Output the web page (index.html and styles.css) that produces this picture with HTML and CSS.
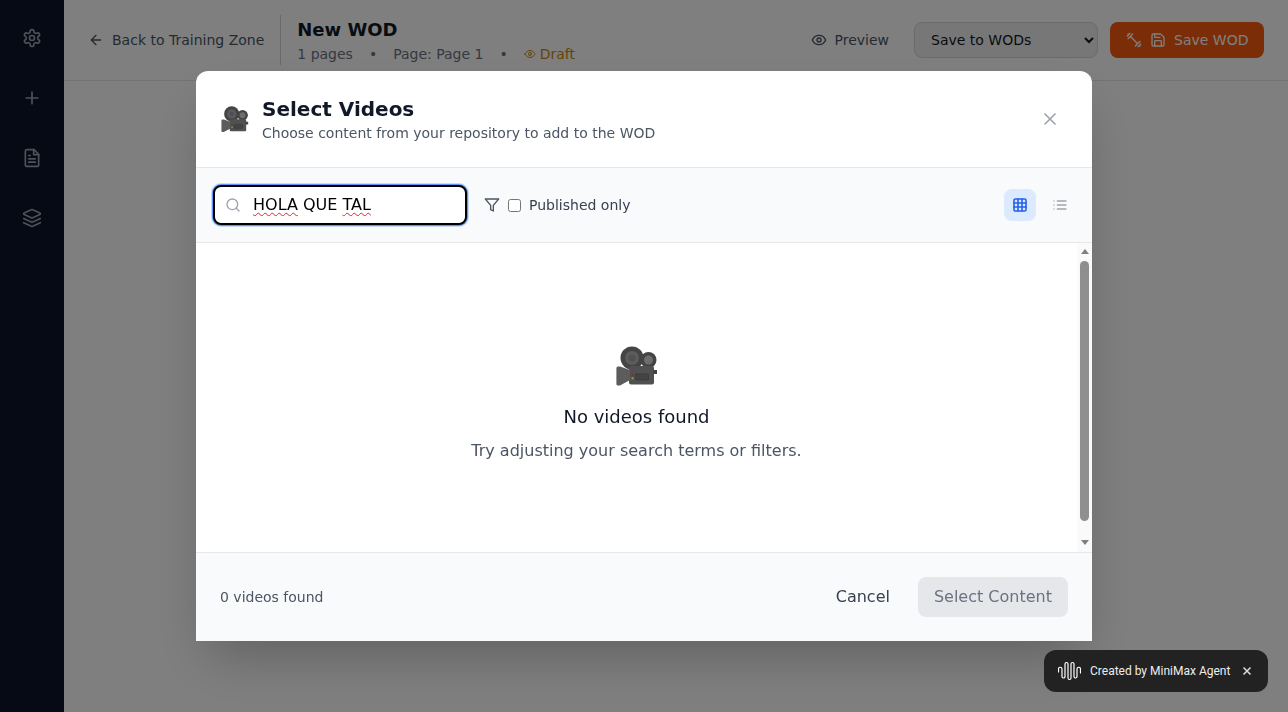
FILE: index.html
```html
<!DOCTYPE html>
<html lang="en">
<head>
<meta charset="utf-8">
<title>New WOD</title>
<link rel="stylesheet" href="styles.css">
</head>
<body>
<svg class="defs" width="0" height="0" aria-hidden="true">
  <symbol id="camera" viewBox="0 0 42 41">
    <circle cx="16" cy="12" r="11.5" fill="#444"/>
    <circle cx="16" cy="12" r="7" fill="#5c5c5c"/>
    <circle cx="16" cy="12" r="3.5" fill="#505050"/>
    <circle cx="32.5" cy="14" r="8" fill="#444"/>
    <circle cx="32.5" cy="14" r="4.5" fill="#6e6e6e"/>
    <rect x="13" y="20" width="25" height="18.5" rx="2" fill="#505050"/>
    <path d="M37 24h4v4h-4z" fill="#444"/>
    <path d="M2 20.5h2L14 24v10L4 39.5H2a1.6 1.6 0 0 1-1.6-1.6V22a1.6 1.6 0 0 1 1.6-1.5z" fill="#5c5c5c"/>
    <rect x="19.5" y="28" width="13" height="6" rx="1" fill="#444" stroke="#333" stroke-width=".6"/>
    <rect x="15.5" y="28" width="2.2" height="2" fill="#a32020"/>
    <rect x="15.5" y="31.3" width="2.2" height="2" fill="#6cae2f"/>
  </symbol>
</svg>

<div class="app">
  <nav class="rail">
    <svg class="icon rail-icon" viewBox="0 0 24 24"><path d="M12.22 2h-.44a2 2 0 0 0-2 2v.18a2 2 0 0 1-1 1.73l-.43.25a2 2 0 0 1-2 0l-.15-.08a2 2 0 0 0-2.73.73l-.22.38a2 2 0 0 0 .73 2.73l.15.1a2 2 0 0 1 1 1.72v.51a2 2 0 0 1-1 1.74l-.15.09a2 2 0 0 0-.73 2.73l.22.38a2 2 0 0 0 2.73.73l.15-.08a2 2 0 0 1 2 0l.43.25a2 2 0 0 1 1 1.73V20a2 2 0 0 0 2 2h.44a2 2 0 0 0 2-2v-.18a2 2 0 0 1 1-1.73l.43-.25a2 2 0 0 1 2 0l.15.08a2 2 0 0 0 2.73-.73l.22-.39a2 2 0 0 0-.73-2.73l-.15-.08a2 2 0 0 1-1-1.74v-.5a2 2 0 0 1 1-1.74l.15-.09a2 2 0 0 0 .73-2.73l-.22-.38a2 2 0 0 0-2.73-.73l-.15.08a2 2 0 0 1-2 0l-.43-.25a2 2 0 0 1-1-1.73V4a2 2 0 0 0-2-2z"/><circle cx="12" cy="12" r="3"/></svg>
    <svg class="icon rail-icon" viewBox="0 0 24 24"><path d="M5 12h14M12 5v14"/></svg>
    <svg class="icon rail-icon" viewBox="0 0 24 24"><path d="M14.5 2H6a2 2 0 0 0-2 2v16a2 2 0 0 0 2 2h12a2 2 0 0 0 2-2V7.5L14.5 2z"/><path d="M14 2v6h6M16 13H8M16 17H8M10 9H8"/></svg>
    <svg class="icon rail-icon" viewBox="0 0 24 24"><path d="M12.83 2.18a2 2 0 0 0-1.66 0L2.6 6.08a1 1 0 0 0 0 1.83l8.58 3.91a2 2 0 0 0 1.66 0l8.58-3.9a1 1 0 0 0 0-1.83Z"/><path d="m22 17.65-9.17 4.16a2 2 0 0 1-1.66 0L2 17.65"/><path d="m22 12.65-9.17 4.16a2 2 0 0 1-1.66 0L2 12.65"/></svg>
  </nav>
  <div class="main">
    <header class="topbar">
      <div class="topbar-left">
        <a class="back">
          <svg class="icon i16" viewBox="0 0 24 24"><path d="m12 19-7-7 7-7M19 12H5"/></svg>
          Back to Training Zone
        </a>
        <div class="title-block">
          <h1 class="page-title">New WOD</h1>
          <div class="meta">
            <span>1 pages</span><span>•</span><span>Page: Page 1</span><span>•</span>
            <span class="draft"><svg class="icon i12" viewBox="0 0 24 24"><path d="M2 12s3-7 10-7 10 7 10 7-3 7-10 7-10-7-10-7Z"/><circle cx="12" cy="12" r="3"/></svg>Draft</span>
          </div>
        </div>
      </div>
      <div class="topbar-right">
        <a class="preview">
          <svg class="icon i16" viewBox="0 0 24 24"><path d="M2 12s3-7 10-7 10 7 10 7-3 7-10 7-10-7-10-7Z"/><circle cx="12" cy="12" r="3"/></svg>
          Preview
        </a>
        <select class="target"><option>Save to WODs</option></select>
        <button class="save">
          <svg class="icon i16" viewBox="0 0 24 24"><path d="m6.5 6.5 11 11M21 21l-1-1M3 3l1 1M18 22l4-4M2 6l4-4M3 10l7-7M14 21l7-7"/></svg>
          <svg class="icon i16" viewBox="0 0 24 24"><path d="M15.2 3a2 2 0 0 1 1.4.6l3.8 3.8a2 2 0 0 1 .6 1.4V19a2 2 0 0 1-2 2H5a2 2 0 0 1-2-2V5a2 2 0 0 1 2-2z"/><path d="M17 21v-7a1 1 0 0 0-1-1H8a1 1 0 0 0-1 1v7M7 3v4a1 1 0 0 0 1 1h7"/></svg>
          <span>Save WOD</span>
        </button>
      </div>
    </header>
  </div>
</div>

<div class="overlay">
  <section class="modal">
    <div class="modal-head">
      <div class="head-left">
        <svg class="emoji-sm"><use href="#camera"/></svg>
        <div>
          <h2 class="modal-title">Select Videos</h2>
          <p class="modal-sub">Choose content from your repository to add to the WOD</p>
        </div>
      </div>
      <svg class="icon close" viewBox="0 0 24 24"><path d="M18 6 6 18M6 6l12 12"/></svg>
    </div>
    <div class="toolbar">
      <div class="search">
        <svg class="icon i16 search-icon" viewBox="0 0 24 24"><circle cx="11" cy="11" r="8"/><path d="m21 21-4.3-4.3"/></svg>
        <span class="query"><span class="typo">HOLA</span> QUE <span class="typo">TAL</span></span>
      </div>
      <svg class="icon i16 filter" viewBox="0 0 24 24"><path d="M22 3H2l8 9.46V19l4 2v-8.54z"/></svg>
      <label class="published"><input type="checkbox" class="check">Published only</label>
      <div class="views">
        <span class="view active"><svg class="icon i16 grid" viewBox="0 0 24 24"><rect x="3" y="3" width="18" height="18" rx="2"/><path d="M3 9h18M3 15h18M9 3v18M15 3v18"/></svg></span>
        <span class="view"><svg class="icon i16" viewBox="0 0 24 24"><path d="M8 6h13M8 12h13M8 18h13M3 6h.01M3 12h.01M3 18h.01"/></svg></span>
      </div>
    </div>
    <div class="results">
      <div class="empty">
        <svg class="emoji-lg"><use href="#camera"/></svg>
        <h3 class="empty-title">No videos found</h3>
        <p class="empty-text">Try adjusting your search terms or filters.</p>
      </div>
      <div class="scrollbar" aria-hidden="true">
        <span class="arrow-up"></span>
        <span class="thumb"></span>
        <span class="arrow-down"></span>
      </div>
    </div>
    <div class="modal-foot">
      <span class="count">0 videos found</span>
      <div class="actions">
        <button class="cancel">Cancel</button>
        <button class="select-content">Select Content</button>
      </div>
    </div>
  </section>
</div>

<aside class="toast">
  <svg class="wave" viewBox="0 0 23 22"><path d="M.5 12V9a1.75 1.75 0 0 1 3.5 0v7.5a1.5 1.5 0 0 0 3 0V4a1.5 1.5 0 0 1 3 0v14a1.5 1.5 0 0 0 3 0V4a1.5 1.5 0 0 1 3 0v12.5a1.5 1.5 0 0 0 3 0V9a1.75 1.75 0 0 1 3.5 0v4"/></svg>
  <span class="toast-text">Created by MiniMax Agent</span>
  <svg class="toast-close" viewBox="0 0 10 10"><path d="M1.5 1.5l7 7M8.5 1.5l-7 7"/></svg>
</aside>
</body>
</html>
```

FILE: styles.css
```css
* { box-sizing: border-box; }
html, body { margin: 0; height: 100%; overflow: hidden; }
body { font-family: "DejaVu Sans", sans-serif; background: #fff; color: #111827; }
h1, h2, h3, p { margin: 0; }
button { font-family: inherit; border: 0; }
.defs { position: absolute; }

.icon { fill: none; stroke: currentColor; stroke-width: 2; stroke-linecap: round; stroke-linejoin: round; flex: none; }
.i16 { width: 16px; height: 16px; }
.i12 { width: 12px; height: 12px; }

.app { display: flex; height: 712px; }
.rail { width: 64px; flex: none; background: #0a1428; display: flex; flex-direction: column; align-items: center; gap: 40px; padding-top: 28px; color: #9ca3af; }
.rail-icon { width: 20px; height: 20px; }

.main { flex: 1; min-width: 0; background: #fff; }
.topbar { height: 81px; border-bottom: 1px solid #e5e7eb; display: flex; align-items: center; justify-content: space-between; padding: 0 24px; }
.topbar-left { display: flex; align-items: center; }
.back { display: flex; align-items: center; gap: 8px; font-size: 14px; color: #4b5563; padding-right: 16px; height: 50px; margin-right: 16px; border-right: 1px solid #d1d5db; }
.page-title { font-size: 18px; line-height: 28px; font-weight: 700; color: #111827; }
.meta { display: flex; gap: 16px; font-size: 14px; line-height: 20px; color: #6b7280; }
.draft { display: flex; align-items: center; gap: 4px; color: #ca8a04; }
.topbar-right { display: flex; align-items: center; gap: 12px; }
.preview { display: flex; align-items: center; gap: 8px; font-size: 14px; color: #4b5563; padding: 0 13px 0 16px; }
.target { width: 184px; height: 36px; font-family: inherit; font-size: 14px; color: #111827; background: #efefef; border: 1px solid #d1d5db; border-radius: 8px; padding: 0 12px; }
.save { display: flex; align-items: center; gap: 8px; width: 154px; height: 36px; padding: 0 16px; border-radius: 8px; background: #f55a0e; color: #fff; font-size: 14px; white-space: nowrap; }

.overlay { position: fixed; inset: 0; background: rgba(0, 0, 0, .5); display: flex; align-items: center; justify-content: center; }
.modal { width: 896px; height: 570px; background: #fff; border-radius: 12px 12px 0 0; overflow: hidden; display: flex; flex-direction: column; box-shadow: 0 25px 50px -12px rgba(0, 0, 0, .25); }

.modal-head { height: 97px; flex: none; border-bottom: 1px solid #e5e7eb; padding: 0 32px 0 25px; display: flex; align-items: center; justify-content: space-between; }
.head-left { display: flex; align-items: center; gap: 13px; }
.emoji-sm { width: 28px; height: 27px; }
.modal-title { font-size: 20px; line-height: 28px; font-weight: 700; color: #111827; }
.modal-sub { font-size: 14px; line-height: 20px; color: #4b5563; }
.close { width: 20px; height: 20px; color: #9ca3af; stroke-width: 2; }

.toolbar { height: 75px; flex: none; background: #f9fafb; border-bottom: 1px solid #e5e7eb; padding: 0 16px; display: flex; align-items: center; }
.search { width: 254px; height: 40px; background: #fff; border: 2px solid #000; border-radius: 8px; box-shadow: 0 0 0 1px #5b96f7, 0 0 0 2px #c5dafc; display: flex; align-items: center; padding-left: 10px; margin: 0 17px 0 1px; }
.search-icon { color: #9ca3af; }
.query { margin: 0 0 2px 12px; font-size: 16px; color: #000; }
.typo { text-decoration: underline wavy #e5252a 1px; text-underline-offset: 2px; text-decoration-skip-ink: none; }
.filter { color: #4b5563; margin-right: 8px; }
.published { display: flex; align-items: center; gap: 8px; font-size: 14px; color: #374151; }
.check { width: 13px; height: 13px; margin: 0; }
.views { margin-left: auto; display: flex; gap: 8px; }
.view { width: 32px; height: 32px; border-radius: 8px; display: flex; align-items: center; justify-content: center; color: #9ca3af; }
.view.active { background: #dbeafe; color: #2563eb; }
.grid { stroke-width: 2.4; }

.results { flex: 1; min-height: 0; display: flex; }
.empty { flex: 1; min-width: 0; padding-top: 103px; display: flex; flex-direction: column; align-items: center; }
.emoji-lg { width: 42px; height: 41px; margin-bottom: 16px; flex: none; }
.empty-title { font-size: 18px; line-height: 28px; font-weight: 400; color: #111827; margin-bottom: 8px; }
.empty-text { font-size: 16px; line-height: 24px; color: #4b5563; }

.scrollbar { width: 15px; flex: none; background: #fafafa; display: flex; flex-direction: column; align-items: center; padding: 6px 0 7px; }
.arrow-up { width: 0; height: 0; border: 4.5px solid transparent; border-top: 0; border-bottom: 5px solid #808080; }
.thumb { width: 9px; height: 260px; margin: 7px 0 19px; background: #8f8f8f; border-radius: 5px; }
.arrow-down { width: 0; height: 0; border: 4.5px solid transparent; border-bottom: 0; border-top: 5px solid #808080; }

.modal-foot { height: 89px; flex: none; background: #f9fafb; border-top: 1px solid #e5e7eb; padding: 0 24px; display: flex; align-items: center; justify-content: space-between; }
.count { font-size: 14px; color: #4b5563; }
.actions { display: flex; align-items: center; gap: 12px; }
.cancel { height: 40px; padding: 0 16px 2px; background: none; font-size: 16px; color: #374151; }
.select-content { height: 40px; padding: 0 16px 2px; background: #e5e7eb; border-radius: 8px; font-size: 16px; color: #6b7280; }

.toast { position: fixed; right: 20px; bottom: 20px; width: 224px; height: 42px; background: #222; border-radius: 12px; display: flex; align-items: center; padding: 0 16px 0 14px; color: #fff; font-family: Roboto, sans-serif; }
.wave { width: 23px; height: 22px; fill: none; stroke: #fff; stroke-width: 1.2; stroke-linecap: round; stroke-linejoin: round; flex: none; }
.toast-text { font-size: 12px; margin-left: 9px; white-space: nowrap; opacity: .92; }
.toast-close { width: 10px; height: 10px; margin-left: auto; fill: none; stroke: #ddd; stroke-width: 1.5; flex: none; }
```
